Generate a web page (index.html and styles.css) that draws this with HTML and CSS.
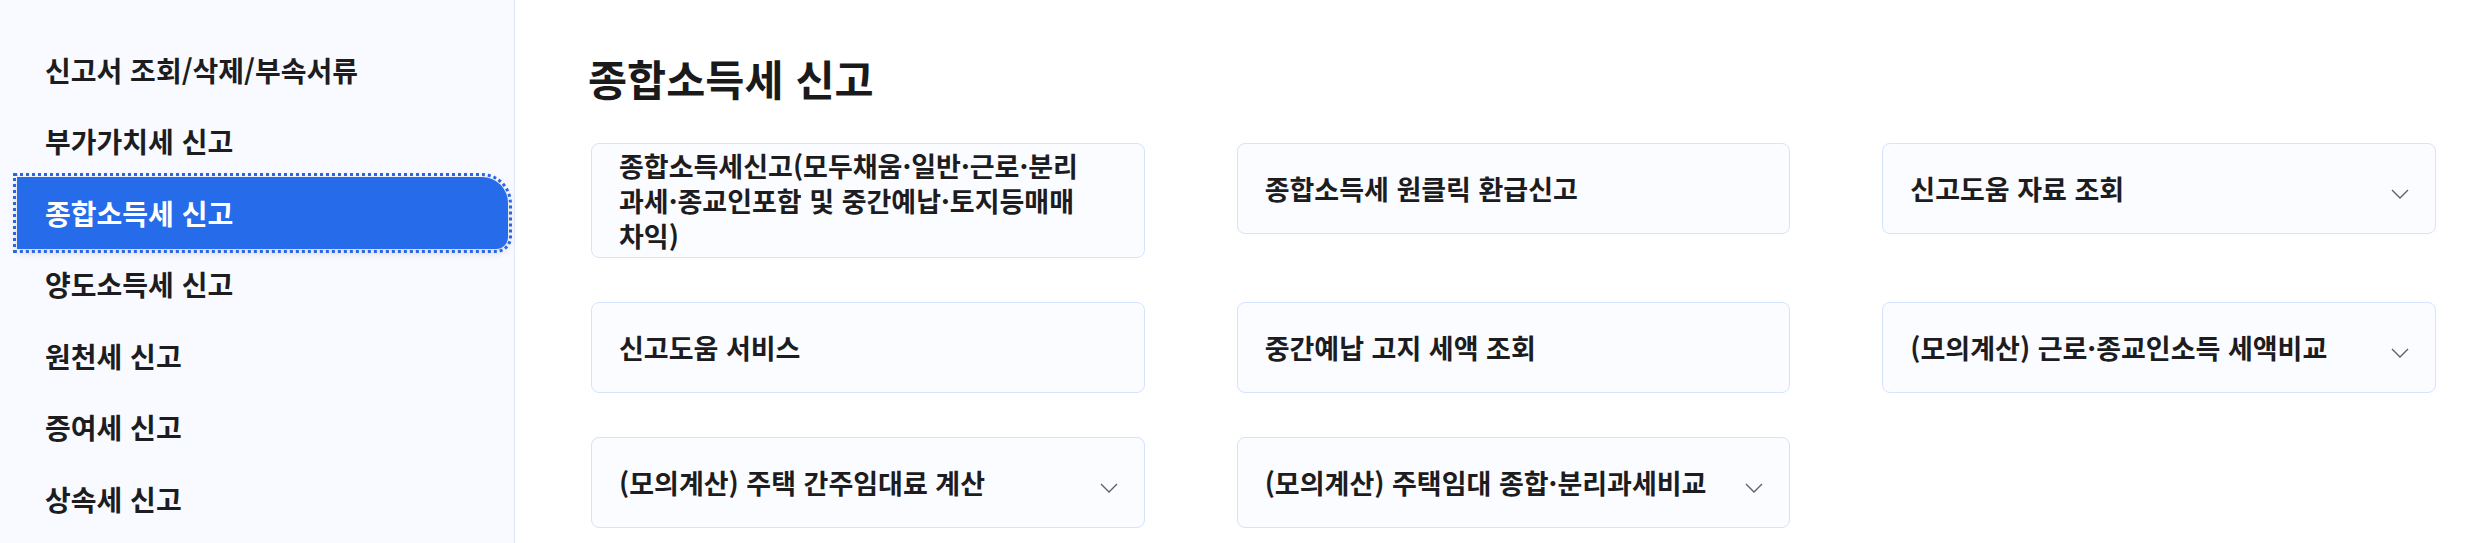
FILE: index.html
```html
<!DOCTYPE html>
<html lang="ko">
  <head>
    <meta charset="UTF-8" />
    <meta name="viewport" content="width=device-width, initial-scale=1.0" />
    <title>종합소득세 신고</title>
    <link rel="stylesheet" href="styles.css">
  </head>
  <body>
    <nav class="side-menu">
      <a class="menu-item" href="#">신고서 조회/삭제/부속서류</a>
      <a class="menu-item" href="#">부가가치세 신고</a>
      <a class="menu-item active" href="#">종합소득세 신고</a>
      <a class="menu-item" href="#">양도소득세 신고</a>
      <a class="menu-item" href="#">원천세 신고</a>
      <a class="menu-item" href="#">증여세 신고</a>
      <a class="menu-item" href="#">상속세 신고</a>
    </nav>

    <main class="content">
      <h2 class="page-title">종합소득세 신고</h2>

      <div class="card-grid">
        <div class="card">
          <span class="card-label">종합소득세신고(모두채움·일반·근로·분리과세·종교인포함 및 중간예납·토지등매매차익)</span>
        </div>
        <div class="card">
          <span class="card-label">종합소득세 원클릭 환급신고</span>
        </div>
        <div class="card">
          <span class="card-label">신고도움 자료 조회</span>
          <svg class="chevron" viewBox="0 0 18 10"><polyline points="1,1 9,9 17,1" /></svg>
        </div>

        <div class="card">
          <span class="card-label">신고도움 서비스</span>
        </div>
        <div class="card">
          <span class="card-label">중간예납 고지 세액 조회</span>
        </div>
        <div class="card">
          <span class="card-label">(모의계산) 근로·종교인소득 세액비교</span>
          <svg class="chevron" viewBox="0 0 18 10"><polyline points="1,1 9,9 17,1" /></svg>
        </div>

        <div class="card">
          <span class="card-label">(모의계산) 주택 간주임대료 계산</span>
          <svg class="chevron" viewBox="0 0 18 10"><polyline points="1,1 9,9 17,1" /></svg>
        </div>
        <div class="card">
          <span class="card-label">(모의계산) 주택임대 종합·분리과세비교</span>
          <svg class="chevron" viewBox="0 0 18 10"><polyline points="1,1 9,9 17,1" /></svg>
        </div>
      </div>
    </main>
  </body>
</html>
```

FILE: styles.css
```css
body {
  font-family: "Noto Sans CJK KR", "Noto Sans", sans-serif;
  margin: 0;
  display: flex;
  height: 543px;
  overflow: hidden;
  color: #1d1d1f;
  background: #fff;
}
.side-menu {
  width: 514px;
  flex: none;
  background: #f8faff;
  border-right: 1px solid #dde6f8;
  padding-top: 34px;
  display: flex;
  flex-direction: column;
}
.menu-item {
  height: 71.5px;
  display: flex;
  align-items: center;
  padding-left: 45px;
  font-size: 28px;
  font-weight: 700;
  color: #1d1d1f;
  text-decoration: none;
}
.menu-item.active {
  margin: 0 6px 0 17px;
  padding-left: 28px;
  background: #266be9;
  color: #fff;
  border-radius: 0 26px 12px 0;
  box-shadow: 0 3px 10px rgba(0, 0, 0, 0.16);
  outline: 3px dotted #2a66e2;
  outline-offset: 1px;
}
.content {
  flex: 1;
  padding: 51px 47px 0 76px;
}
.page-title {
  margin: 0 0 39px -3px;
  font-size: 42.5px;
  line-height: 53px;
  font-weight: 700;
  color: #1a1a1a;
}
.card-grid {
  display: grid;
  grid-template-columns: repeat(3, 1fr);
  column-gap: 92px;
  row-gap: 44px;
  align-items: start;
}
.card {
  box-sizing: border-box;
  min-height: 91px;
  display: flex;
  align-items: center;
  padding: 4px 26px 4px 27px;
  background: #fbfcff;
  border: 1px solid #d5e3fc;
  border-radius: 8px;
  font-size: 27px;
  font-weight: 700;
  line-height: 35px;
}
.card-label {
  flex: 1;
  max-width: 470px;
}
.chevron {
  flex: none;
  width: 18px;
  height: 10px;
  margin: 10px 0 0 auto;
  fill: none;
  stroke: #5c5f66;
  stroke-width: 1.3;
}
```
